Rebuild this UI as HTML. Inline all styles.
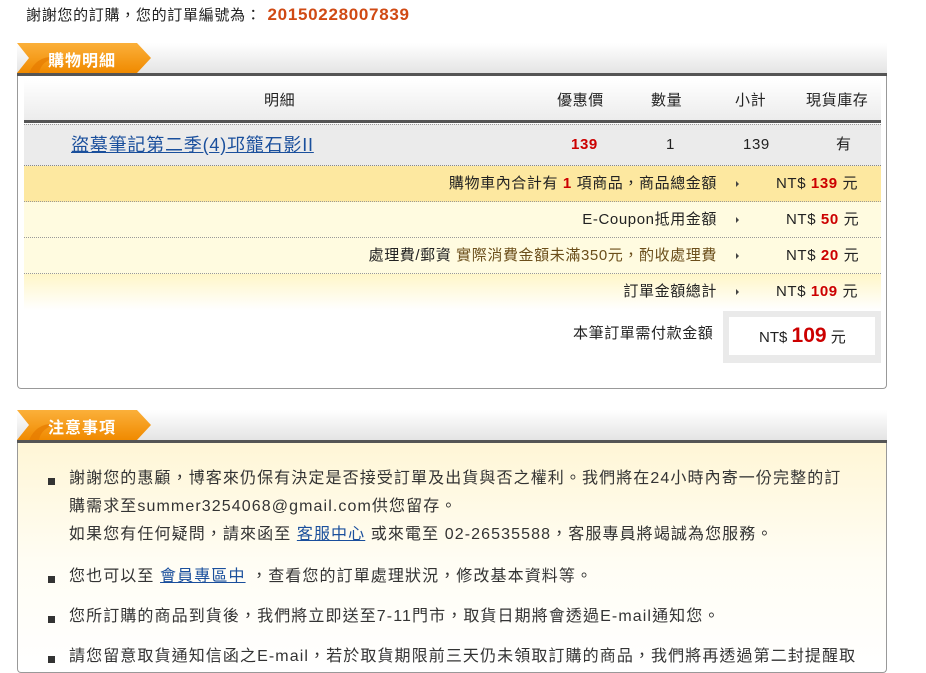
<!DOCTYPE html>
<html><head><meta charset="utf-8"><style>
*{margin:0;padding:0;box-sizing:border-box}
body{width:926px;height:661px;overflow:hidden;background:#fff;font-family:"Liberation Sans","Noto Sans CJK TC",sans-serif;font-size:14px;color:#222;position:relative}
.abs{position:absolute}
.title{left:26px;top:4px;font-size:15px;color:#222;letter-spacing:.7px}
.title b{color:#d04a14;font-size:17px;margin-left:6px;letter-spacing:.7px}
.bar{left:17px;width:870px;height:33px;background:linear-gradient(#fff,#e4e4e4);border-bottom:3px solid #555}
.tab{left:17px;height:30px;width:134px}
.tabt{color:#fff;font-weight:bold;font-size:16px;left:48px;letter-spacing:1px}
.box{left:17px;width:870px;border:1px solid #999;border-top:none;border-radius:0 0 4px 4px}
.row{position:absolute;left:6px;width:857px;letter-spacing:.6px}
.dot{border-bottom:1px dotted #999}
.red{color:#c00;font-weight:bold}
.arr{position:absolute;left:712px;top:15px;width:0;height:0;border-left:3px solid #444;border-top:3px solid transparent;border-bottom:3px solid transparent}
ul{list-style:none}
li{position:absolute;left:52px;font-size:16px;line-height:28px;color:#333;letter-spacing:1.1px}
li:before{content:"";position:absolute;left:-4px;top:13px;width:7px;height:7px;background:#333}
li span.t{position:absolute;left:17px;white-space:nowrap}
a{color:#1a4f9c;text-decoration:underline}
</style></head><body>
<div class="abs title">謝謝您的訂購，您的訂單編號為：<b>20150228007839</b></div>

<div class="abs bar" style="top:43px"></div>
<svg class="abs tab" style="top:43px" viewBox="0 0 134 30"><defs><linearGradient id="g" x1="0" y1="0" x2="0" y2="1"><stop offset="0" stop-color="#fbb03a"/><stop offset="1" stop-color="#f08a00"/></linearGradient></defs><path d="M0 0H120L134 15L120 30H0L12 15Z" fill="url(#g)"/><path d="M12 30 Q20 12 40 14 Q24 18 22 30Z" fill="#e67a00" opacity=".7"/></svg>
<div class="abs tabt" style="top:47px">購物明細</div>

<div class="abs box" style="top:76px;height:313px">
 <div class="row" style="top:4px;height:43px;background:linear-gradient(#fff,#ececec);border-bottom:3px solid #555;font-size:15px;line-height:42px">
  <span class="abs" style="left:240px">明細</span>
  <span class="abs" style="left:533px">優惠價</span>
  <span class="abs" style="left:627px">數量</span>
  <span class="abs" style="left:711px">小計</span>
  <span class="abs" style="left:782px">現貨庫存</span>
 </div>
 <div class="row" style="top:48px;height:42px;background:#ebebeb;border-top:1px dotted #999;border-bottom:1px dotted #888;line-height:40px">
  <a class="abs" style="left:47px;font-size:18px;letter-spacing:.8px">盜墓筆記第二季(4)邛籠石影II</a>
  <span class="abs red" style="left:547px;font-size:15px">139</span>
  <span class="abs" style="left:642px;font-size:15px">1</span>
  <span class="abs" style="left:719px;font-size:15px">139</span>
  <span class="abs" style="left:812px;font-size:15px">有</span>
 </div>
 <div class="row dot" style="top:90px;height:36px;background:#fde8a0;line-height:36px;font-size:15px">
  <span class="abs" style="right:164px;white-space:nowrap">購物車內合計有 <span class="red">1</span> 項商品，商品總金額</span><span class="arr"></span><span class="abs" style="left:752px">NT$ <span class="red">139</span> 元</span>
 </div>
 <div class="row dot" style="top:126px;height:36px;background:#fffbe0;line-height:36px;font-size:15px">
  <span class="abs" style="right:164px;white-space:nowrap">E-Coupon抵用金額</span><span class="arr"></span><span class="abs" style="left:762px">NT$ <span class="red">50</span> 元</span>
 </div>
 <div class="row dot" style="top:162px;height:36px;background:#fffbe0;line-height:36px;font-size:15px">
  <span class="abs" style="right:164px;white-space:nowrap">處理費/郵資 <span style="color:#6b4e1a">實際消費金額未滿350元，酌收處理費</span></span><span class="arr"></span><span class="abs" style="left:762px">NT$ <span class="red">20</span> 元</span>
 </div>
 <div class="row" style="top:198px;height:36px;background:linear-gradient(#fff6c8,#fff);line-height:36px;font-size:15px">
  <span class="abs" style="right:164px;white-space:nowrap">訂單金額總計</span><span class="arr"></span><span class="abs" style="left:752px">NT$ <span class="red">109</span> 元</span>
 </div>
 <div class="abs" style="left:555px;top:246px;font-size:15px;letter-spacing:.6px">本筆訂單需付款金額</div>
 <div class="abs" style="left:705px;top:235px;width:158px;height:52px;background:#eaeaea;padding:6px">
  <div style="background:#fff;height:38px;line-height:38px;padding-left:30px;font-size:15px">NT$ <span class="red" style="font-size:21px">109</span> 元</div>
 </div>
</div>

<div class="abs bar" style="top:410px"></div>
<svg class="abs tab" style="top:410px" viewBox="0 0 134 30"><path d="M0 0H120L134 15L120 30H0L12 15Z" fill="url(#g)"/><path d="M12 30 Q20 12 40 14 Q24 18 22 30Z" fill="#e67a00" opacity=".7"/></svg>
<div class="abs tabt" style="top:414px">注意事項</div>
<div class="abs box" style="top:443px;height:230px;background:linear-gradient(#fff6d6,#fffdf4 120px,#fff)">
</div>
<ul>
<li style="top:465px"><span class="t">謝謝您的惠顧，博客來仍保有決定是否接受訂單及出貨與否之權利。我們將在24小時內寄一份完整的訂</span></li>
<li style="top:493px"><span class="t">購需求至summer3254068@gmail.com供您留存。</span></li>
<li style="top:521px"><span class="t">如果您有任何疑問，請來函至 <a>客服中心</a> 或來電至 02-26535588，客服專員將竭誠為您服務。</span></li>
<li style="top:563px"><span class="t">您也可以至 <a>會員專區中</a> ，查看您的訂單處理狀況，修改基本資料等。</span></li>
<li style="top:603px"><span class="t">您所訂購的商品到貨後，我們將立即送至7-11門市，取貨日期將會透過E-mail通知您。</span></li>
<li style="top:643px"><span class="t">請您留意取貨通知信函之E-mail，若於取貨期限前三天仍未領取訂購的商品，我們將再透過第二封提醒取</span></li>
</ul>
<style>li:nth-child(2):before,li:nth-child(3):before{display:none}</style>
</body></html>
